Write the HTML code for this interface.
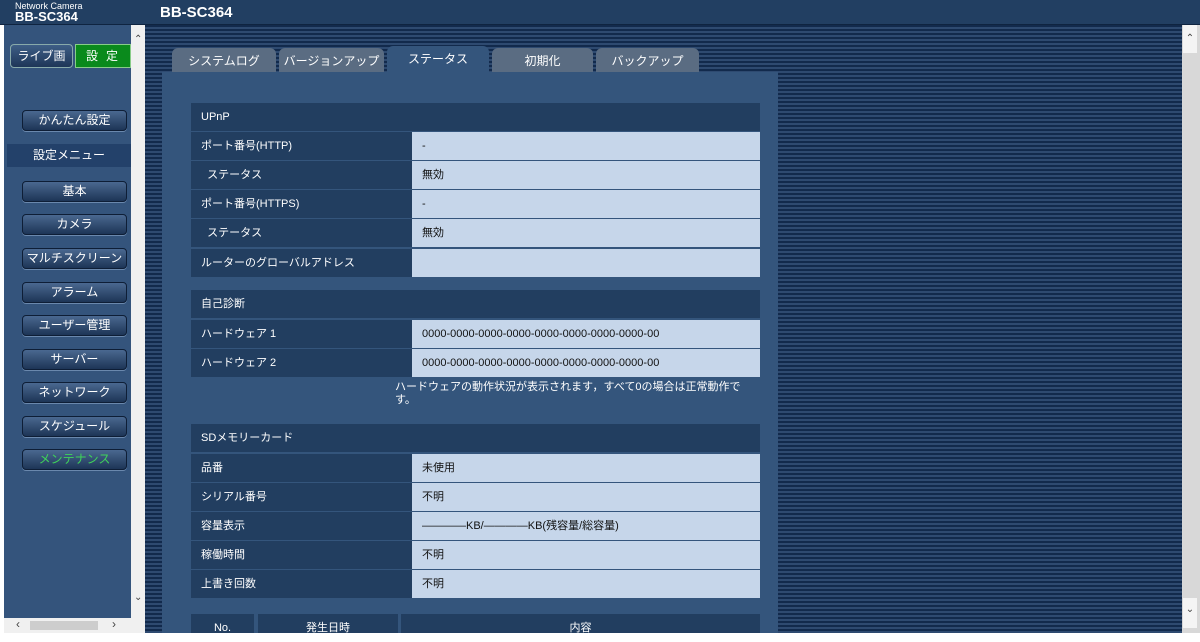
<!DOCTYPE html>
<html><head><meta charset="utf-8"><style>
*{margin:0;padding:0;box-sizing:border-box}
body{width:1200px;height:636px;overflow:hidden;background:#fff;font-family:"Liberation Sans","Noto Sans CJK JP",sans-serif;position:relative}
.a{position:absolute}
.top{left:0;top:0;width:1200px;height:25px;background:#223f62;border-bottom:1px solid #0f2440}
.side{left:4px;top:25px;width:127px;height:593px;background:#34547c}
.btn{position:absolute;left:22px;width:105px;height:21px;border-radius:4px;background:linear-gradient(#4a6890,#1d3556);border:1px solid #0e1e36;color:#fff;font-size:12px;text-align:center;line-height:19px;box-shadow:0 1px 0 #6a88ad}
.main{left:145px;top:25px;width:1037px;height:611px;background:repeating-linear-gradient(#122a4c 0 2px,#2e4a70 2px 4px)}
.panel{left:162px;top:72px;width:616px;height:564px;background:#34557c}
.tab{position:absolute;top:48px;height:24px;background:#5a6c82;color:#fff;font-size:12px;text-align:center;line-height:26px;border-top-left-radius:6px;border-top-right-radius:6px}
.row{position:absolute;left:191px;width:569px;height:28px;background:#223e60;color:#fff;font-size:11px;line-height:28px}
.row .l{position:absolute;left:10px}
.row .v{position:absolute;left:221px;top:0;width:348px;height:28px;background:#c6d6ea;color:#111;padding-left:10px}
.sb{background:#e8e8e8}
</style></head><body>
<div class="a top"></div>
<div class="a" style="left:15px;top:1px;color:#fff;font-size:9px">Network Camera</div>
<div class="a" style="left:15px;top:9px;color:#fff;font-size:13px;font-weight:bold">BB-SC364</div>
<div class="a" style="left:160px;top:4px;color:#fff;font-size:15px;font-weight:bold">BB-SC364</div>
<div class="a side"></div>
<div class="a sb" style="left:131px;top:25px;width:14px;height:593px;background:#f0f0f0"></div>
<div class="a" style="left:134px;top:34px;color:#444;font-size:10px">&#8963;</div>
<div class="a" style="left:134px;top:592px;color:#444;font-size:10px">&#8964;</div>
<div class="a" style="left:4px;top:618px;width:141px;height:18px;background:#f0f0f0"></div>
<div class="a" style="left:30px;top:621px;width:68px;height:9px;background:#cdcdcd"></div>
<div class="a" style="left:16px;top:617px;font-size:12px;color:#444">&lsaquo;</div>
<div class="a" style="left:112px;top:617px;font-size:12px;color:#444">&rsaquo;</div>
<div class="a" style="left:10px;top:44px;width:63px;height:24px;border-radius:4px;background:linear-gradient(#3e5e86,#1e3658);border:1px solid #8aa;color:#fff;font-size:12px;text-align:center;line-height:22px">ライブ画</div>
<div class="a" style="left:75px;top:44px;width:56px;height:24px;background:#0a8a1c;border:1px solid #8c8;color:#fff;font-size:12px;text-align:center;line-height:22px;letter-spacing:8px;padding-left:6px">設定</div>
<div class="btn" style="top:110px">かんたん設定</div>
<div class="a" style="left:7px;top:144px;width:124px;height:23px;background:#23416a;color:#fff;font-size:12px;text-align:center;line-height:23px">設定メニュー</div>
<div class="btn" style="top:181px">基本</div>
<div class="btn" style="top:214px">カメラ</div>
<div class="btn" style="top:248px">マルチスクリーン</div>
<div class="btn" style="top:282px">アラーム</div>
<div class="btn" style="top:315px">ユーザー管理</div>
<div class="btn" style="top:349px">サーバー</div>
<div class="btn" style="top:382px">ネットワーク</div>
<div class="btn" style="top:416px">スケジュール</div>
<div class="btn" style="top:449px;color:#3fd35a">メンテナンス</div>
<div class="a main"></div>
<div class="a" style="left:1182px;top:25px;width:18px;height:611px;background:#d8d8d8"></div>
<div class="a" style="left:1183px;top:25px;width:14px;height:28px;background:#f4f4f4;font-size:10px;text-align:center;color:#444;padding-top:8px">&#8963;</div>
<div class="a" style="left:1183px;top:598px;width:14px;height:30px;background:#f4f4f4;font-size:10px;text-align:center;color:#444;padding-top:6px">&#8964;</div>
<div class="tab" style="left:172px;width:104px">システムログ</div>
<div class="tab" style="left:279px;width:105px">バージョンアップ</div>
<div class="tab" style="left:387px;width:102px;background:#34557c;top:46px;height:26px">ステータス</div>
<div class="tab" style="left:492px;width:101px">初期化</div>
<div class="tab" style="left:596px;width:103px">バックアップ</div>
<div class="a panel"></div>
<div class="row" style="top:103px"><span class="l">UPnP</span></div>
<div class="row" style="top:132px"><span class="l">ポート番号(HTTP)</span><div class="v">-</div></div>
<div class="row" style="top:161px"><span class="l">&nbsp;&nbsp;ステータス</span><div class="v">無効</div></div>
<div class="row" style="top:190px"><span class="l">ポート番号(HTTPS)</span><div class="v">-</div></div>
<div class="row" style="top:219px"><span class="l">&nbsp;&nbsp;ステータス</span><div class="v">無効</div></div>
<div class="row" style="top:249px"><span class="l">ルーターのグローバルアドレス</span><div class="v"></div></div>
<div class="row" style="top:290px"><span class="l">自己診断</span></div>
<div class="row" style="top:320px"><span class="l">ハードウェア 1</span><div class="v">0000-0000-0000-0000-0000-0000-0000-0000-00</div></div>
<div class="row" style="top:349px"><span class="l">ハードウェア 2</span><div class="v">0000-0000-0000-0000-0000-0000-0000-0000-00</div></div>
<div class="a" style="left:395px;top:381px;width:365px;color:#fff;font-size:11px;line-height:13px">ハードウェアの動作状況が表示されます，すべて0の場合は正常動作です。</div>
<div class="row" style="top:424px"><span class="l">SDメモリーカード</span></div>
<div class="row" style="top:454px"><span class="l">品番</span><div class="v">未使用</div></div>
<div class="row" style="top:483px"><span class="l">シリアル番号</span><div class="v">不明</div></div>
<div class="row" style="top:512px"><span class="l">容量表示</span><div class="v">————KB/————KB(残容量/総容量)</div></div>
<div class="row" style="top:541px"><span class="l">稼働時間</span><div class="v">不明</div></div>
<div class="row" style="top:570px"><span class="l">上書き回数</span><div class="v">不明</div></div>
<div class="a" style="left:191px;top:614px;width:63px;height:22px;background:#223e60;color:#fff;font-size:11px;text-align:center;line-height:28px">No.</div>
<div class="a" style="left:258px;top:614px;width:140px;height:22px;background:#223e60;color:#fff;font-size:11px;text-align:center;line-height:28px">発生日時</div>
<div class="a" style="left:401px;top:614px;width:359px;height:22px;background:#223e60;color:#fff;font-size:11px;text-align:center;line-height:28px">内容</div>
<div class="a" style="left:0;top:633px;width:1200px;height:3px;background:#fff"></div>
</body></html>
